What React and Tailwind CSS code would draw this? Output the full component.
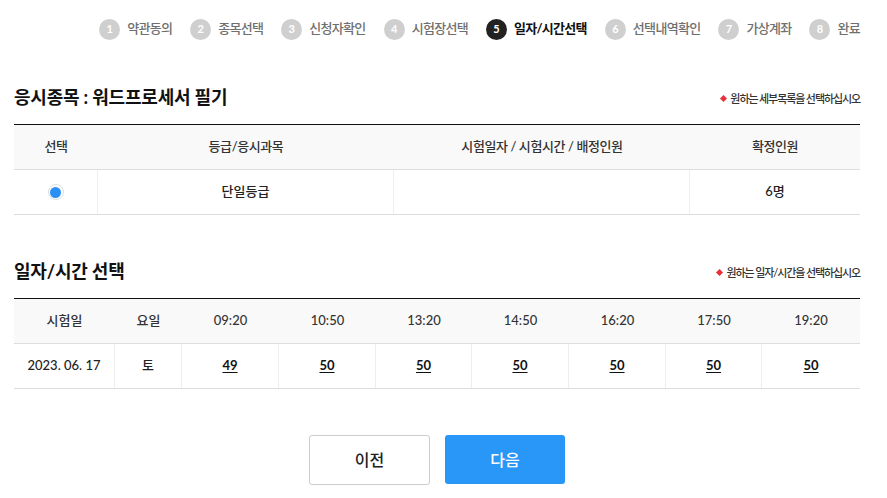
import React from "react";

const steps = ["약관동의", "종목선택", "신청자확인", "시험장선택", "일자/시간선택", "선택내역확인", "가상계좌", "완료"];
const times = ["09:20", "10:50", "13:20", "14:50", "16:20", "17:50", "19:20"];
const counts = ["49", "50", "50", "50", "50", "50", "50"];

function Note({ text }) {
  return (
    <div className="flex items-center gap-[3px] text-[11px] font-medium text-[#333] tracking-[-1.1px]">
      <span className="inline-block w-[5px] h-[5px] bg-[#e8313a] rotate-45 mr-[1px]" />
      <span>{text}</span>
    </div>
  );
}

export default function App() {
  return (
    <div
      className="w-[887px] h-[498px] bg-white text-[#333] overflow-hidden"
      style={{ fontFamily: "Lato, 'Noto Sans CJK KR', sans-serif" }}
    >
      <div className="flex justify-end items-center pt-[18px] pr-[27px] h-[40px]">
        {steps.map((s, i) => {
          const active = i === 4;
          return (
            <div key={s} className={`flex items-center ${i > 0 ? "ml-[18px]" : ""}`}>
              <span
                className={`w-[21px] h-[21px] rounded-full flex items-center justify-center text-[11px] font-bold text-white ${
                  active ? "bg-[#222]" : "bg-[#cfcfcf]"
                }`}
              >
                {i + 1}
              </span>
              <span
                className={`ml-[7px] text-[13px] tracking-[-0.7px] ${
                  active ? "font-bold text-[#111]" : "font-medium text-[#6f6f6f]"
                }`}
              >
                {s}
              </span>
            </div>
          );
        })}
      </div>

      <div className="pl-[14px] pr-[27px]">
        <div className="flex items-end justify-between mt-[44px]">
          <h2 className="text-[18px] font-bold text-[#111] leading-[26px] tracking-[-0.2px]">응시종목 : 워드프로세서 필기</h2>
          <div className="pb-[3px]"><Note text="원하는 세부목록을 선택하십시오" /></div>
        </div>

        <div className="mt-[14px] border-t border-[#111]">
          <div className="grid grid-cols-[84px_296px_296px_1fr] h-[45px] bg-[#f9f9f9] border-b border-[#ddd] items-center text-center text-[13px] font-medium text-[#333] tracking-[-0.4px]">
            <div>선택</div>
            <div>등급/응시과목</div>
            <div>시험일자 / 시험시간 / 배정인원</div>
            <div>확정인원</div>
          </div>
          <div className="grid grid-cols-[84px_296px_296px_1fr] h-[45px] border-b border-[#ddd] text-center text-[13px] font-medium text-[#222]">
            <div className="flex items-center justify-center border-r border-[#eee]">
              <span className="w-[16px] h-[16px] rounded-full border border-[#ddd] flex items-center justify-center bg-white">
                <span className="w-[11px] h-[11px] rounded-full bg-[#2a90f4]" />
              </span>
            </div>
            <div className="flex items-center justify-center border-r border-[#eee]">단일등급</div>
            <div className="border-r border-[#eee]" />
            <div className="flex items-center justify-center">6명</div>
          </div>
        </div>

        <div className="flex items-end justify-between mt-[43px]">
          <h2 className="text-[18px] font-bold text-[#111] leading-[26px] tracking-[-0.2px]">일자/시간 선택</h2>
          <div className="pb-[3px]"><Note text="원하는 일자/시간을 선택하십시오" /></div>
        </div>

        <div className="mt-[14px] border-t border-[#111]">
          <div className="grid grid-cols-[101px_67px_97px_97px_96px_97px_97px_96px_1fr] h-[45px] bg-[#f9f9f9] border-b border-[#ddd] items-center text-center text-[13px] font-medium text-[#333]">
            <div>시험일</div>
            <div>요일</div>
            {times.map((t) => (
              <div key={t}>{t}</div>
            ))}
          </div>
          <div className="grid grid-cols-[101px_67px_97px_97px_96px_97px_97px_96px_1fr] h-[45px] border-b border-[#ddd] text-center text-[13px] font-medium text-[#222]">
            <div className="flex items-center justify-center border-r border-[#eee]">2023. 06. 17</div>
            <div className="flex items-center justify-center border-r border-[#eee]">토</div>
            {counts.map((c, i) => (
              <div
                key={i}
                className={`flex items-center justify-center ${i < 6 ? "border-r border-[#eee]" : ""}`}
              >
                <span className="font-bold underline underline-offset-2 text-[#111]">{c}</span>
              </div>
            ))}
          </div>
        </div>

        <div className="flex justify-center gap-[15px] mt-[46px]">
          <button className="w-[121px] h-[50px] rounded-[3px] border border-[#ccc] bg-white text-[16px] font-medium text-[#222]">이전</button>
          <button className="w-[120px] h-[49px] rounded-[3px] bg-[#2997f8] text-[16px] font-medium text-white">다음</button>
        </div>
      </div>
    </div>
  );
}
